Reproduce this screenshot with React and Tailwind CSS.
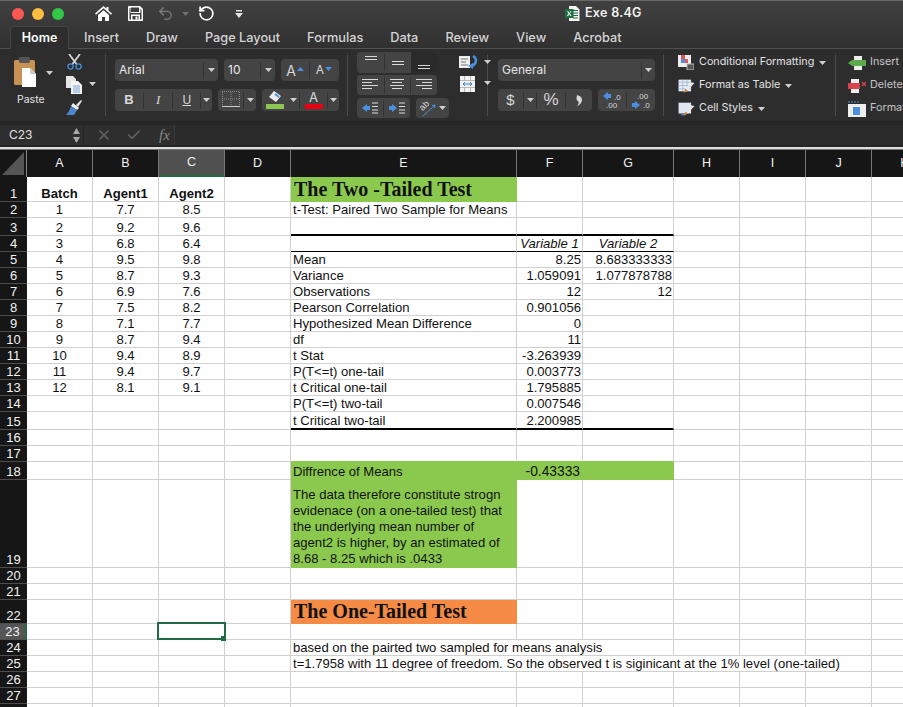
import React from "react";
import { RotateCcw, Undo2, Check, X } from "lucide-react";

const Caret = ({ c = "#cfcfcf", className = "" }) => (
  <svg width="7" height="4" viewBox="0 0 7 4" className={className}><path d="M0 0h7L3.5 4z" fill={c} /></svg>
);
const Dv = () => <div className="w-px h-[17px] bg-[#333333] shrink-0" />;
const Sep = () => <div className="w-px h-[62px] bg-[#4a4a4a] shrink-0 self-center" />;
const Group = ({ w, className = "", children }) => (
  <div className={`flex items-center h-[22px] rounded-[4px] bg-[#444444] shrink-0 ${w} ${className}`}>{children}</div>
);
const Cell3 = ({ w, children }) => <div className={`flex items-center justify-center h-full ${w}`}>{children}</div>;

const Lines = ({ ys, xs }) => (
  <svg width="16" height="16" viewBox="0 0 16 16">
    {ys.map((y, i) => (
      <rect key={i} x={xs[i][0]} y={y} width={xs[i][1]} height="1" fill="#d9d9d9" />
    ))}
  </svg>
);

const Tabs = ["Insert", "Draw", "Page Layout", "Formulas", "Data", "Review", "View", "Acrobat"];

function TitleBar() {
  return (
    <div className="h-[27px] flex items-center pl-[12px] pb-[1px] border-t border-[#686868] relative">
      <div className="flex gap-[8px]">
        <div className="w-[12px] h-[12px] rounded-full bg-[#fc5753]" />
        <div className="w-[12px] h-[12px] rounded-full bg-[#fdbc40]" />
        <div className="w-[12px] h-[12px] rounded-full bg-[#33c748]" />
      </div>
      <svg width="17" height="15" viewBox="0 0 17 15" className="ml-[31px]">
        <path d="M8.5 0 0 7.5 1 8.7 8.5 2.3 16 8.7 17 7.5 13.5 4.4V1h-2v1.7z" fill="#fff" />
        <path d="M3 9 8.5 4.2 14 9v6h-4v-4H7v4H3z" fill="#fff" />
      </svg>
      <svg width="15" height="15" viewBox="0 0 15 15" className="ml-[16px]">
        <path fillRule="evenodd" d="M1 0h11l3 3v11a1 1 0 0 1-1 1H1a1 1 0 0 1-1-1V1a1 1 0 0 1 1-1zm2 1.5V6h8V1.5zM1.500 2v11.500H3V8.500h9v5h1.500V3.700L12.500 2.500V7H2.500V2zM4.500 10v3.500h6V10z" fill="#fff" />
        <rect x="7.500" y="10.500" width="2" height="3" fill="#fff" />
      </svg>
      <Undo2 size={17} color="#7a7a7a" strokeWidth={2} className="ml-[14px]" />
      <Caret c="#6e6e6e" className="ml-[8px]" />
      <RotateCcw size={17} color="#ffffff" strokeWidth={2.4} className="ml-[9px]" />
      <svg width="8" height="8" viewBox="0 0 8 8" className="ml-[20px]">
        <rect x="1" y="0" width="6" height="1.500" fill="#e5e5e5" />
        <path d="M0 3h8L4 8z" fill="#e5e5e5" />
      </svg>
      <svg width="15" height="15" viewBox="0 0 15 15" className="ml-[322px]">
        <path d="M4 0h7l3.500 3.500V15H4z" fill="#f4f4f4" />
        <path d="M8 4h5v1H8zM8 6.500h5v1H8zM8 9h5v1H8zM8 11.500h5v1H8z" fill="#1d6f42" />
        <rect x="0" y="3" width="8.500" height="9" fill="#1d6f42" />
        <path d="M2 5.200 3.200 5.200 4.300 6.900 5.400 5.200 6.500 5.200 4.900 7.500 6.600 10 5.400 10 4.300 8.200 3.100 10 1.900 10 3.600 7.500z" fill="#fff" />
      </svg>
      <span className="ml-[5px] text-[12.500px] tracking-[0.3px] font-semibold text-[#f2f2f2] font-['Inter',sans-serif]">Exe 8.4G</span>
    </div>
  );
}

function TabRow() {
  return (
    <div className="h-[22px] flex items-end pl-[10px] border-b border-[#505050] font-['Inter',sans-serif] text-[12.750px] font-medium">
      <div className="h-[23px] w-[59px] rounded-t-[4px] bg-[#2d2d2d] border-x border-t border-[#454545] -mb-px flex items-center justify-center text-[#ffffff] font-semibold text-[12.500px]">Home</div>
      <div className="flex gap-[27px] pl-[15px] h-full items-center text-[#d4d4d4]">
        {Tabs.map((t) => <span key={t}>{t}</span>)}
      </div>
    </div>
  );
}

function PasteSection() {
  return (
    <div className="w-[105px] shrink-0 flex pl-[14px] relative">
      <div className="w-[30px] flex flex-col items-start pt-[8px]">
        <svg width="24" height="30" viewBox="0 0 24 30">
          <rect x="0" y="3" width="21" height="25" rx="1.500" fill="#c89255" />
          <rect x="5" y="0" width="11" height="6" rx="1.500" fill="#555555" />
          <path d="M8 11h8l6 6v13H8z" fill="#ffffff" />
          <path d="M16 11v6h6z" fill="#c9c9c9" />
        </svg>
        <span className="mt-[5px] ml-[3px] text-[10.500px] text-[#e4e4e4] font-['Inter',sans-serif]">Paste</span>
      </div>
      <Caret className="mt-[22px] ml-[2px]" />
      <div className="ml-[13px] flex flex-col items-center pt-[5px] gap-[6px]">
        <svg width="15" height="16" viewBox="0 0 15 16">
          <path d="M2 0 9.500 10M13 0 5.500 10" stroke="#d4d4d4" strokeWidth="1.800" />
          <circle cx="3.500" cy="12.500" r="2.600" fill="none" stroke="#4a90e2" strokeWidth="1.200" />
          <circle cx="11.500" cy="12.500" r="2.600" fill="none" stroke="#4a90e2" strokeWidth="1.200" />
        </svg>
        <svg width="16" height="18" viewBox="0 0 16 18">
          <path d="M0 0h7l3 3v9H0z" fill="#e6e6e6" />
          <path d="M5 5h7l4 4v9H5z" fill="#f5f5f5" />
          <path d="M7 10h7M7 12h7M7 14h7M7 16h7" stroke="#7aa6d8" strokeWidth="1" />
        </svg>
        <svg width="16" height="16" viewBox="0 0 16 16">
          <path d="M10 5 15 0l1 1-4 6z" fill="#e6e6e6" />
          <path d="M7 3l6 5-2 2-6-4z" fill="#efefef" />
          <path d="M5 6l6 4-3 5-8 0c2-2 4-5 5-9z" fill="#4a86d0" />
        </svg>
      </div>
      <Caret className="mt-[33px] ml-[7px]" />
    </div>
  );
}

function FontSection() {
  return (
    <div className="w-[241px] shrink-0 pl-[9px] pt-[10px] flex flex-col gap-[8px] text-[#eaeaea]">
      <div className="flex gap-[6px]">
        <Group w="w-[103px]">
          <span className="flex-1 pl-[4px] text-[12px] font-['Inter',sans-serif]">Arial</span>
          <Dv /><Cell3 w="w-[14px]"><Caret /></Cell3>
        </Group>
        <Group w="w-[51px]">
          <span className="flex-1 pl-[4px] text-[12px] font-['Inter',sans-serif]">10</span>
          <Dv /><Cell3 w="w-[14px]"><Caret /></Cell3>
        </Group>
        <Group w="w-[58px]">
          <Cell3 w="w-[28px]">
            <span className="text-[14px] text-[#d8d8d8] font-['Inter',sans-serif]">A</span>
            <svg width="7" height="4" viewBox="0 0 7 4" className="-mt-[3px] ml-[1px]"><path d="M0 4h7L3.500 0z" fill="#4a90e2" /></svg>
          </Cell3>
          <Dv />
          <Cell3 w="w-[28px]">
            <span className="text-[12px] text-[#d8d8d8] font-['Inter',sans-serif]">A</span>
            <Caret c="#4a90e2" className="-mt-[3px] ml-[1px]" />
          </Cell3>
        </Group>
      </div>
      <div className="flex gap-[6px]">
        <Group w="w-[97px]">
          <Cell3 w="w-[28px]"><span className="font-bold text-[13px] text-[#d8d8d8] font-['Liberation_Sans',sans-serif]">B</span></Cell3>
          <Dv />
          <Cell3 w="w-[29px]"><span className="italic text-[13px] text-[#d8d8d8] font-['Liberation_Serif',serif]">I</span></Cell3>
          <Dv />
          <Cell3 w="w-[27px]"><span className="underline text-[12px] text-[#d8d8d8] font-['Liberation_Sans',sans-serif]">U</span></Cell3>
          <Dv />
          <Cell3 w="w-[11px]"><Caret /></Cell3>
        </Group>
        <Group w="w-[38px]">
          <Cell3 w="w-[25px]">
            <svg width="18" height="18" viewBox="0 0 18 18">
              <path d="M.5 1v14M9 1v14M17.500 1v14M0 .5h18M0 8h18" stroke="#8a8a8a" strokeDasharray="1 1" />
              <rect x="0" y="15" width="18" height="1" fill="#d0d0d0" />
            </svg>
          </Cell3>
          <Dv /><Cell3 w="w-[12px]"><Caret /></Cell3>
        </Group>
        <Group w="w-[77px]">
          <Cell3 w="w-[26px]">
            <svg width="18" height="18" viewBox="0 0 18 18">
              <path d="M8 0 15 5 10 11 3 6z" fill="#ececec" />
              <path d="M9 3 13 6" stroke="#4a90e2" strokeWidth="2" />
              <rect x="0" y="13" width="18" height="5" fill="#8cc751" />
            </svg>
          </Cell3>
          <Cell3 w="w-[11px]"><Caret /></Cell3>
          <Dv />
          <Cell3 w="w-[27px]">
            <div className="flex flex-col items-center">
              <span className="text-[13px] leading-[13px] text-[#d8d8d8] font-['Inter',sans-serif]">A</span>
              <div className="w-[18px] h-[5px] bg-[#e60012]" />
            </div>
          </Cell3>
          <Dv />
          <Cell3 w="w-[11px]"><Caret /></Cell3>
        </Group>
      </div>
    </div>
  );
}

function AlignSection() {
  const full = [0, 16];
  return (
    <div className="w-[139px] shrink-0 pl-[9px] pt-[3px] relative flex gap-[10px]">
      <div className="flex flex-col gap-[2px]">
        <div className="flex items-center h-[21px] rounded-[4px] bg-[#444444] w-[80px]">
          <Cell3 w="w-[27px]"><Lines ys={[1, 4]} xs={[[2, 12], [2, 12]]} /></Cell3>
          <Dv />
          <Cell3 w="w-[26px]"><Lines ys={[6, 9]} xs={[[2, 12], [2, 12]]} /></Cell3>
          <div className="flex items-center justify-center h-full w-[26px] bg-[#2a2a2a] rounded-r-[4px]"><Lines ys={[10, 13]} xs={[[2, 12], [2, 12]]} /></div>
        </div>
        <div className="flex items-center h-[20px] rounded-[4px] bg-[#444444] w-[80px]">
          <Cell3 w="w-[27px]"><Lines ys={[2, 5, 8, 11]} xs={[full, [0, 10], full, [0, 10]]} /></Cell3>
          <Dv />
          <Cell3 w="w-[26px]"><Lines ys={[2, 5, 8, 11]} xs={[[1, 14], [3, 10], [1, 14], [3, 10]]} /></Cell3>
          <Dv />
          <Cell3 w="w-[26px]"><Lines ys={[2, 5, 8, 11]} xs={[full, [6, 10], full, [6, 10]]} /></Cell3>
        </div>
        <div className="flex gap-[6px] mt-[1px]">
          <div className="flex items-center h-[20px] rounded-[4px] bg-[#444444] w-[53px]">
            <Cell3 w="w-[26px]">
              <svg width="16" height="12" viewBox="0 0 16 12">
                <path d="M0 6l5-4v2h3v4H5v2z" fill="#4a90e2" />
                <path d="M10 1h6M10 4.500h6M10 8h6M10 11h6" stroke="#d9d9d9" />
              </svg>
            </Cell3>
            <Dv />
            <Cell3 w="w-[26px]">
              <svg width="16" height="12" viewBox="0 0 16 12">
                <path d="M8 6 3 2v2H0v4h3v2z" fill="#4a90e2" />
                <path d="M10 1h6M10 4.500h6M10 8h6M10 11h6" stroke="#d9d9d9" />
              </svg>
            </Cell3>
          </div>
          <div className="flex items-center justify-center gap-[3px] h-[20px] rounded-[4px] bg-[#444444] w-[33px]">
            <svg width="17" height="17" viewBox="0 0 17 17">
              <text x="1" y="9" fontSize="9" fill="#d9d9d9" fontFamily="Liberation Sans" transform="rotate(-45 5 7)">ab</text>
              <path d="M4 16 16 5M16 5l-3 .5M16 5l-.5 3" stroke="#4a90e2" fill="none" />
            </svg>
            <Caret />
          </div>
        </div>
      </div>
      <div className="flex flex-col pt-[3px] gap-[6px]">
        <div className="flex items-start">
          <svg width="19" height="15" viewBox="0 0 19 15">
            <rect x="0" y="1" width="11" height="12" fill="#eeeeee" />
            <path d="M2 4h7M2 7h5M2 10h7" stroke="#777777" />
            <path d="M14 1c4 2 4 8-1 10" stroke="#4a90e2" strokeWidth="2.500" fill="none" />
            <path d="M9 11l5-3v6z" fill="#4a90e2" />
          </svg>
          <Caret className="ml-[6px] mt-[5px]" />
        </div>
        <div className="flex items-start ml-[1px]">
          <svg width="15" height="16" viewBox="0 0 15 16">
            <rect width="15" height="16" fill="#f2f2f2" />
            <path d="M0 4.500h15M0 11.500h15M4.500 0v4.500M10.500 0v4.500M4.500 11.500V16M10.500 11.500V16" stroke="#b8b8b8" />
            <path d="M3 8h9M3 8l2-2M3 8l2 2M12 8l-2-2M12 8l-2 2" stroke="#3a80d2" fill="none" />
          </svg>
          <Caret className="ml-[9px] mt-[5px]" />
        </div>
      </div>
    </div>
  );
}

function NumberSection() {
  return (
    <div className="w-[175px] shrink-0 pl-[10px] pt-[10px] flex flex-col gap-[8px] text-[#e4e4e4]">
      <Group w="w-[157px]">
        <span className="flex-1 pl-[4px] text-[12px] font-['Inter',sans-serif]">General</span>
        <Dv /><Cell3 w="w-[13px]"><Caret /></Cell3>
      </Group>
      <div className="flex gap-[6px]">
        <Group w="w-[94px]">
          <Cell3 w="w-[25px]"><span className="text-[15px] font-['Liberation_Sans',sans-serif] text-[#d8d8d8]">$</span></Cell3>
          <Dv />
          <Cell3 w="w-[12px]"><Caret /></Cell3>
          <Dv />
          <Cell3 w="w-[28px]"><span className="text-[17px] font-['Liberation_Sans',sans-serif] text-[#d8d8d8]">%</span></Cell3>
          <Dv />
          <Cell3 w="w-[26px]">
            <svg width="7" height="11" viewBox="0 0 7 11">
              <path d="M1 0c4 1 5 3 5 5s-2 5-5 6c1.500-2 2-3 1.500-4.500C1.500 6 .5 5 .5 3.500.5 2 1 1 1 0z" fill="#d8d8d8" />
            </svg>
          </Cell3>
        </Group>
        <Group w="w-[57px]">
          <Cell3 w="w-[28px]">
            <svg width="18" height="17" viewBox="0 0 18 17">
              <path d="M0 4l5-4v2h3v4H5v2z" fill="#4a90e2" />
              <text x="11" y="8" fontSize="8" fill="#d9d9d9" fontFamily="Liberation Sans">.0</text>
              <text x="3" y="16" fontSize="8" fill="#d9d9d9" fontFamily="Liberation Sans">.00</text>
            </svg>
          </Cell3>
          <Dv />
          <Cell3 w="w-[28px]">
            <svg width="18" height="17" viewBox="0 0 18 17">
              <text x="5" y="7" fontSize="8" fill="#d9d9d9" fontFamily="Liberation Sans">.00</text>
              <path d="M8 13 3 9v2H0v4h3v2z" fill="#4a90e2" />
              <text x="11" y="16" fontSize="8" fill="#d9d9d9" fontFamily="Liberation Sans">.0</text>
            </svg>
          </Cell3>
        </Group>
      </div>
    </div>
  );
}

function StylesSection() {
  const row = "flex items-center h-[23px] text-[10.800px] text-[#e2e2e2] font-['Inter',sans-serif]";
  const Pen = () => (
    <>
      <path d="M15 5 8 13l3 2 8-9z" fill="#e8e8e8" />
      <path d="M8 13l3 2-5 3z" fill="#d98a3c" />
    </>
  );
  return (
    <div className="w-[171px] shrink-0 pl-[14px] pt-[2px] flex flex-col">
      <div className={row}>
        <svg width="16" height="15" viewBox="0 0 16 15" className="mr-[5px]">
          <rect width="13" height="12" fill="#eeeeee" />
          <rect x="3" y="0" width="4" height="4" fill="#e05656" />
          <rect x="3" y="4" width="4" height="4" fill="#4a90e2" />
          <rect x="7" y="4" width="3" height="4" fill="#e05656" />
          <rect x="9" y="9" width="7" height="6" fill="#555555" stroke="#bbbbbb" />
        </svg>
        Conditional Formatting<Caret className="ml-[5px]" />
      </div>
      <div className={row}>
        <svg width="17" height="15" viewBox="0 0 19 18" className="mr-[4px]">
          <rect width="15" height="14" y="2" fill="#e8eef6" />
          <path d="M0 5h15M0 9h15M0 13h15M5 2v14M10 2v14" stroke="#9fb6d3" />
          <Pen />
        </svg>
        Format as Table<Caret className="ml-[5px]" />
      </div>
      <div className={row}>
        <svg width="17" height="15" viewBox="0 0 19 18" className="mr-[4px]">
          <rect width="15" height="13" y="2" fill="#dfe8f3" />
          <path d="M2 17l5-3v3z" fill="#4a90e2" />
          <Pen />
        </svg>
        Cell Styles<Caret className="ml-[5px]" />
      </div>
    </div>
  );
}

function CellsSection() {
  const row = "flex items-center h-[23px] text-[10.800px] text-[#c4c4c4] font-['Inter',sans-serif] whitespace-nowrap";
  return (
    <div className="flex-1 pl-[12px] pt-[2px] flex flex-col overflow-hidden">
      <div className={row}>
        <svg width="18" height="14" viewBox="0 0 18 14" className="mr-[4px] shrink-0">
          <rect x="6" width="8" height="14" fill="#eeeeee" />
          <rect x="4" y="4" width="14" height="6" fill="#5cab4a" />
          <path d="M0 7l4-3v6z" fill="#5cab4a" />
        </svg>Insert
      </div>
      <div className={row}>
        <svg width="18" height="14" viewBox="0 0 18 14" className="mr-[4px] shrink-0">
          <rect x="3" width="8" height="14" fill="#eeeeee" />
          <rect x="0" y="4" width="12" height="6" fill="#d9454f" />
          <path d="M14 3l4 4M18 3l-4 4" stroke="#d9454f" strokeWidth="1.300" />
        </svg>Delete
      </div>
      <div className={row}>
        <svg width="18" height="16" viewBox="0 0 18 16" className="mr-[4px] shrink-0">
          <rect y="3" width="18" height="13" fill="#eeeeee" />
          <rect x="5" y="6" width="7" height="8" fill="#4a90e2" />
          <path d="M0 1h12" stroke="#4a90e2" strokeDasharray="2 1" />
        </svg>Format
      </div>
    </div>
  );
}

function FormulaBar() {
  return (
    <div className="h-[26px] bg-[#252525] flex pt-[4px] pb-[2px]">
      <div className="w-[84px] flex items-center justify-between pl-[9px] pr-[3px] bg-[#2e2e2e] border-r border-[#252525]">
        <span className="text-[12px] text-[#e0e0e0] font-['Inter',sans-serif]">C23</span>
        <div className="flex flex-col gap-[3px]">
          <svg width="7" height="6" viewBox="0 0 7 6"><path d="M0 6h7L3.500 0z" fill="#aaaaaa" /></svg>
          <svg width="7" height="6" viewBox="0 0 7 6"><path d="M0 0h7L3.500 6z" fill="#aaaaaa" /></svg>
        </div>
      </div>
      <div className="flex-1 flex items-center bg-[#2e2e2e] pl-[12px]">
        <X size={16} color="#616161" strokeWidth={2.5} />
        <Check size={16} color="#616161" strokeWidth={2.5} className="ml-[14px]" />
        <span className="ml-[17px] w-[13px] italic text-[15px] text-[#8a8a8a] font-['Liberation_Serif',serif]">fx</span>
        <div className="ml-[2px] flex-1 h-full bg-[#2a2a2a] border-l border-[#3a3a3a]" />
      </div>
    </div>
  );
}

const COLS = ["A", "B", "C", "D", "E", "F", "G", "H", "I", "J", "K"];
const G = "bg-[#8bc94e] border-[#8bc94e]!";
const BLK2 = "border-b-2 border-b-black";
const BLK1 = "border-b-black";
const heads = "font-['Liberation_Serif',serif] font-bold text-[20px] pl-[3px] leading-[24px]";

const A = [["Batch", "Agent1", "Agent2"], [1, 7.7, 8.5], [2, 9.2, 9.6], [3, 6.8, 6.4], [4, 9.5, 9.8], [5, 8.7, 9.3], [6, 6.9, 7.6], [7, 7.5, 8.2], [8, 7.1, 7.7], [9, 8.7, 9.4], [10, 9.4, 8.9], [11, 9.4, 9.7], [12, 8.1, 9.1]];
const stats = {
  5: ["Mean", "8.25", "8.683333333"],
  6: ["Variance", "1.059091", "1.077878788"],
  7: ["Observations", "12", "12"],
  8: ["Pearson Correlation", "0.901056", ""],
  9: ["Hypothesized Mean Difference", "0", ""],
  10: ["df", "11", ""],
  11: ["t Stat", "-3.263939", ""],
  12: ["P(T<=t) one-tail", "0.003773", ""],
  13: ["t Critical one-tail", "1.795885", ""],
  14: ["P(T<=t) two-tail", "0.007546", ""],
  15: ["t Critical two-tail", "2.200985", ""],
};

function cellsFor(r) {
  const m = {};
  const ab = A[r - 1];
  if (ab) {
    ["A", "B", "C"].forEach((c, i) => {
      m[c] = { t: ab[i], cls: `justify-center ${r === 1 ? "font-bold" : ""}` };
    });
  }
  const s = stats[r];
  if (s) {
    m.E = { t: s[0], cls: "pl-[2px]" };
    m.F = { t: s[1], cls: "justify-end pr-[1px]" };
    m.G = { t: s[2], cls: "justify-end pr-[1px]" };
    if (r === 15) {
      m.E.cls += ` ${BLK2}`; m.F.cls += ` ${BLK2}`; m.G.cls += ` ${BLK2}`;
    }
  }
  if (r === 1) m.E = { t: "The Two -Tailed Test", cls: `${heads} ${G}` };
  if (r === 2) m.E = { t: "t-Test: Paired Two Sample for Means", cls: "pl-[2px]" };
  if (r === 3) {
    m.E = { t: "", cls: BLK2 }; m.F = { t: "", cls: BLK2 }; m.G = { t: "", cls: BLK2 };
  }
  if (r === 4) {
    m.E = { t: "", cls: BLK1 };
    m.F = { t: "Variable 1", cls: `italic justify-center ${BLK1}` };
    m.G = { t: "Variable 2", cls: `italic justify-center ${BLK1}` };
  }
  if (r === 17) {
    m.E = { t: "", cls: "border-b-[#8bc94e]" }; m.F = { t: "", cls: "border-b-[#8bc94e]" }; m.G = { t: "", cls: "border-b-[#8bc94e]" };
  }
  if (r === 18) {
    m.E = { t: "Diffrence of Means", cls: `pl-[2px] ${G}` };
    m.F = { t: "-0.43333", cls: `justify-end pr-[2px] text-[13.800px] ${G}` };
    m.G = { t: "", cls: G };
  }
  if (r === 19) {
    m.E = {
      t: (
        <span className="leading-[16.100px]">
          The data therefore constitute strogn<br />evidenace (on a one-tailed test) that<br />the underlying mean number of<br />agent2 is higher, by an estimated of<br />8.68 - 8.25 which is .0433
        </span>
      ),
      cls: `pl-[2px] ${G}`,
    };
  }
  if (r === 22) m.E = { t: "The One-Tailed Test", cls: `${heads} bg-[#f58b45] border-[#f58b45]!` };
  if (r === 23) m.C = { t: <Selection />, cls: "relative" };
  if (r === 24) m.E = { t: "based on the pairted two sampled for means analysis", cls: "pl-[2px] col-span-3", span: 3 };
  if (r === 25) m.E = { t: "t=1.7958 with 11 degree of freedom. So the observed t is siginicant at the 1% level (one-tailed)", cls: "pl-[2px] col-span-6", span: 6 };
  return m;
}

const Selection = () => (
  <>
    <div className="absolute -left-[2px] -top-[2px] w-[69px] h-[18px] border-2 border-[#1f6b43]" />
    <div className="absolute -right-[2px] -bottom-[2px] w-[5px] h-[5px] bg-[#1f6b43]" />
  </>
);

function Sheet() {
  const rows = Array.from({ length: 28 }, (_, i) => i + 1);
  return (
    <div className="grid grid-cols-[27px_66px_66px_66px_66px_226px_66px_91px_66px_66px_66px_66px] grid-rows-[27px_25px_16px_18px_16px_16px_16px_16px_16px_16px_16px_16px_16px_16px_16px_18px_16px_16px_18px_88px_16px_16px_24px_16px_16px_16px_16px_16px_16px] bg-white text-[13.100px] text-[#111111] font-['Liberation_Sans',sans-serif]">
      <div className="bg-[#161616] border-r border-[#8a8a8a] flex items-center justify-center relative">
        <svg width="23" height="23" viewBox="0 0 23 23"><path d="M22 0v23H0z" fill="#555555" /></svg>
      </div>
      {COLS.map((c) => (
        <div key={c} className={`flex items-center justify-center text-[12.500px] text-[#f2f2f2] border-r border-[#777777] ${c === "C" ? "bg-[#505050] border-b-2 border-b-[#1f6b43]" : "bg-[#161616]"}`}>{c}</div>
      ))}
      {rows.map((r) => {
        const m = cellsFor(r);
        const out = [
          <div key={`h${r}`} className={`flex items-end justify-center text-[13px] leading-[15px] text-[#f2f2f2] border-b border-[#4d4d4d] ${r === 23 ? "bg-[#555555] border-r-2 border-r-[#1f6b43]" : "bg-[#161616]"}`}>{r}</div>,
        ];
        let skip = 0;
        COLS.forEach((c) => {
          if (skip > 0) { skip--; return; }
          const d = m[c] || { t: "", cls: "" };
          if (d.span) skip = d.span - 1;
          out.push(
            <div key={`${c}${r}`} className={`flex items-end whitespace-nowrap leading-[15px] border-r border-b border-[#d0d0d0] min-w-0 ${d.cls}`}>{d.t}</div>
          );
        });
        return out;
      })}
    </div>
  );
}

export default function App() {
  return (
    <div className="w-[903px] h-[707px] overflow-hidden bg-white">
      <div className="bg-gradient-to-b from-[#414141] to-[#303030]">
        <TitleBar />
        <TabRow />
      </div>
      <div className="h-[72px] bg-[#2d2d2d] flex">
        <PasteSection /><Sep /><FontSection /><Sep /><AlignSection /><Sep /><NumberSection /><Sep /><StylesSection /><Sep /><CellsSection />
      </div>
      <FormulaBar />
      <div className="h-[2px] bg-[#dcdcdc]" />
      <div className="h-px bg-[#777777]" />
      <Sheet />
    </div>
  );
}
